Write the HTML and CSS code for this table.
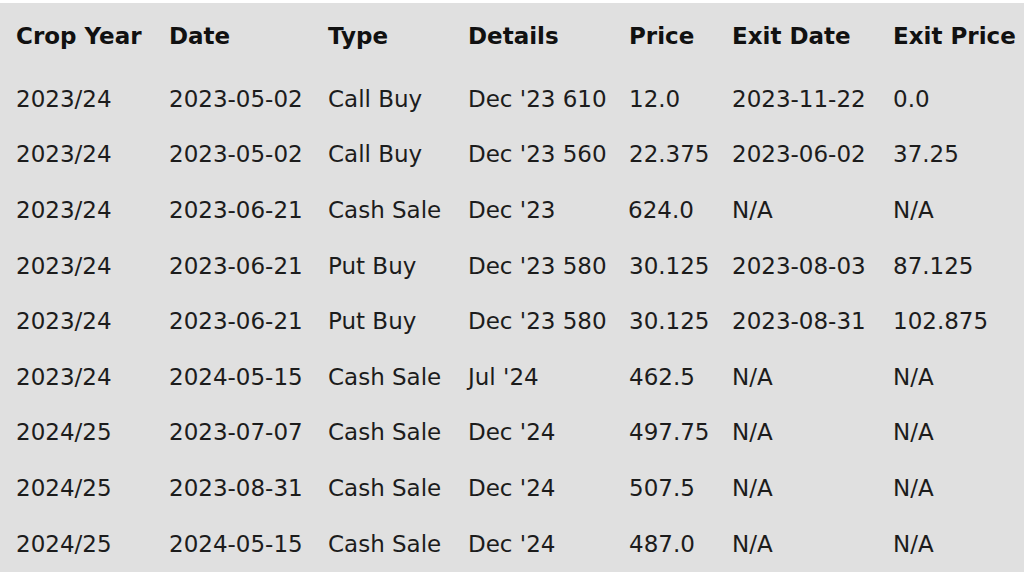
FILE: index.html
```html
<!DOCTYPE html>
<html>
<head>
<meta charset="utf-8">
<link rel="stylesheet" href="styles.css">
</head>
<body>
<div class="sheet">
  <div class="row head">
    <div>Crop Year</div><div>Date</div><div>Type</div><div>Details</div><div>Price</div><div>Exit Date</div><div>Exit Price</div>
  </div>
  <div class="row"><div>2023/24</div><div>2023-05-02</div><div>Call Buy</div><div>Dec '23 610</div><div>12.0</div><div>2023-11-22</div><div>0.0</div></div>
  <div class="row"><div>2023/24</div><div>2023-05-02</div><div>Call Buy</div><div>Dec '23 560</div><div>22.375</div><div>2023-06-02</div><div>37.25</div></div>
  <div class="row"><div>2023/24</div><div>2023-06-21</div><div>Cash Sale</div><div>Dec '23</div><div class="shift">624.0</div><div>N/A</div><div>N/A</div></div>
  <div class="row"><div>2023/24</div><div>2023-06-21</div><div>Put Buy</div><div>Dec '23 580</div><div>30.125</div><div>2023-08-03</div><div>87.125</div></div>
  <div class="row"><div>2023/24</div><div>2023-06-21</div><div>Put Buy</div><div>Dec '23 580</div><div>30.125</div><div>2023-08-31</div><div>102.875</div></div>
  <div class="row"><div>2023/24</div><div>2024-05-15</div><div>Cash Sale</div><div>Jul '24</div><div>462.5</div><div>N/A</div><div>N/A</div></div>
  <div class="row"><div>2024/25</div><div>2023-07-07</div><div>Cash Sale</div><div>Dec '24</div><div>497.75</div><div>N/A</div><div>N/A</div></div>
  <div class="row"><div>2024/25</div><div>2023-08-31</div><div>Cash Sale</div><div>Dec '24</div><div>507.5</div><div>N/A</div><div>N/A</div></div>
  <div class="row"><div>2024/25</div><div>2024-05-15</div><div>Cash Sale</div><div>Dec '24</div><div>487.0</div><div>N/A</div><div>N/A</div></div>
</div>
</body>
</html>
```

FILE: styles.css
```css
html, body {
  margin: 0;
  padding: 0;
  background: #ffffff;
}
body {
  padding-top: 3px;
  font-family: "DejaVu Sans", sans-serif;
  font-size: 23px;
  color: #1c1c1c;
}
.sheet {
  background: #e0e0e0;
  width: 1024px;
  padding-left: 16px;
  padding-bottom: 1px;
  box-sizing: border-box;
}
.row {
  display: grid;
  grid-template-columns: 153px 159px 140px 161px 103px 161px 1fr;
  align-items: center;
  height: 55.6px;
  white-space: nowrap;
}
.row.head {
  height: 68px;
  padding-bottom: 2px;
  box-sizing: border-box;
  font-weight: bold;
  color: #111111;
}
.shift {
  margin-left: -1px;
}
```
